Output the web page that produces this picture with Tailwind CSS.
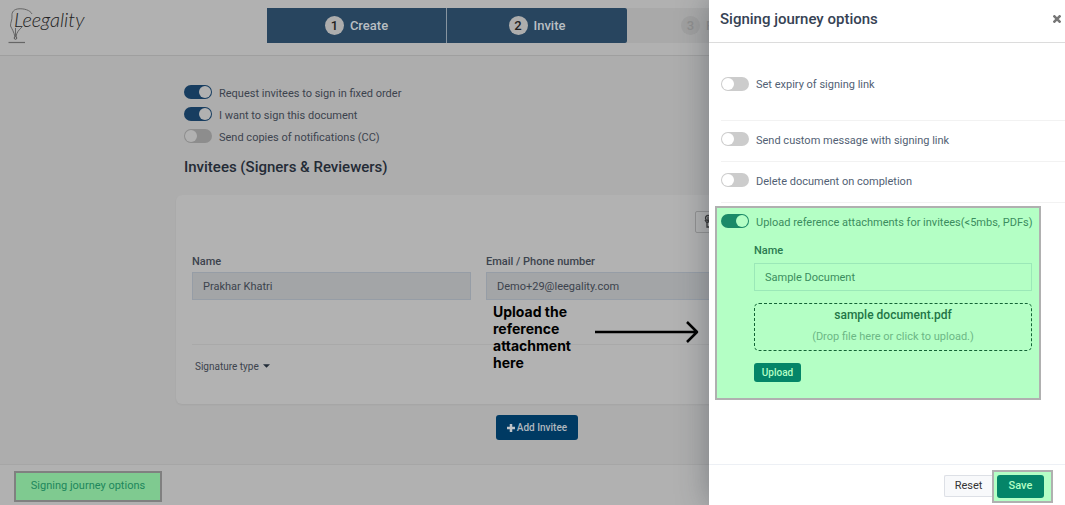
<!DOCTYPE html>
<html lang="en">
<head>
    <meta charset="UTF-8">
    <meta name="viewport" content="width=device-width, initial-scale=1.0">
    <title>Leegality - Invite</title>
    <script src="https://cdn.jsdelivr.net/npm/@tailwindcss/browser@4"></script>
</head>
<body class="relative flex flex-col min-h-screen overflow-hidden bg-[#adadad] font-[Roboto,sans-serif] text-[11px] text-[#3c434d]">
    <!-- Header -->
    <header class="relative flex justify-center bg-[#b1b1b1] border-b border-[#9f9f9f] pt-2 pb-3 pl-[9px]">
        <a href="#" class="absolute left-2 top-2 block">
            <svg class="w-20 h-9" viewBox="0 0 80 36" fill="none">
                <path d="M24 6C22 2 16 0.500 11 0.800C6 1 3.500 4 4 8C4.300 12 2.500 14 2.500 18C4 21 6 24 7 29M14 19C11 22 8.500 24 8 29M7.500 20V28" stroke="#666" stroke-width="1"/>
                <circle cx="7.500" cy="30" r="1.300" stroke="#555"/>
                <path d="M0.500 34.500H17" stroke="#666" stroke-width="1.200"/>
                <text x="6" y="19" font-family="Lato" font-style="italic" font-weight="300" font-size="20" fill="#222">Leegality</text>
            </svg>
        </a>
        <nav class="flex h-[35px] text-[13px]">
            <a href="#" class="flex items-center justify-center gap-[6px] w-[180px] bg-[#28455f] border-r border-[#8794a0] text-[#b9bec3] font-medium">
                <span class="grid place-items-center size-[19px] rounded-full bg-[#adadad] text-[#222]">1</span> Create
            </a>
            <a href="#" class="flex items-center justify-center gap-[6px] w-[180px] rounded-r-xs bg-[#28455f] text-[#b9bec3] font-medium">
                <span class="grid place-items-center size-[19px] rounded-full bg-[#adadad] text-[#222]">2</span> Invite
            </a>
            <a href="#" class="flex items-center pl-[54px] gap-[6px] w-[180px] bg-[#a9a9a9] text-[#8f8f8f] font-medium">
                <span class="grid place-items-center size-[19px] rounded-full bg-[#a0a0a0]">3</span> Review
            </a>
        </nav>
    </header>

    <!-- Invitees -->
    <main class="flex-1 pl-[9px]">
        <div class="w-[722px] mx-auto pt-[25px]">
            <div class="px-2">
                <div class="flex items-center gap-[7px] h-[22px]">
                    <input type="checkbox" id="fixedOrder" checked class="appearance-none shrink-0 w-7 h-[14px] rounded-full bg-[#8d8d8d] checked:bg-[#173d60] p-px before:block before:size-3 before:rounded-full before:bg-[#b1b1b1] checked:before:ml-[14px]">
                    <label for="fixedOrder" class="pt-1">Request invitees to sign in fixed order</label>
                </div>
                <div class="flex items-center gap-[7px] h-[22px]">
                    <input type="checkbox" id="selfSign" checked class="appearance-none shrink-0 w-7 h-[14px] rounded-full bg-[#8d8d8d] checked:bg-[#173d60] p-px before:block before:size-3 before:rounded-full before:bg-[#b1b1b1] checked:before:ml-[14px]">
                    <label for="selfSign" class="pt-1">I want to sign this document</label>
                </div>
                <div class="flex items-center gap-[7px] h-[22px]">
                    <input type="checkbox" id="copies" class="appearance-none shrink-0 w-7 h-[14px] rounded-full bg-[#8d8d8d] checked:bg-[#173d60] p-px before:block before:size-3 before:rounded-full before:bg-[#b1b1b1] checked:before:ml-[14px]">
                    <label for="copies" class="pt-1">Send copies of notifications (CC)</label>
                </div>
                <h2 class="mt-[10px] text-[15px] leading-5 font-medium text-[#242b36]">Invitees (Signers &amp; Reviewers)</h2>
            </div>

            <section class="mt-[18px] rounded-md bg-[#b2b2b2] shadow-xs px-4 pt-4 pb-7">
                <div class="flex justify-end">
                    <button class="w-[187px] h-[22px] pl-2 rounded-xs border border-[#929292]">
                        <svg class="w-3 h-4" viewBox="0 0 12 16" fill="none" stroke="#333" stroke-width="1.300">
                            <circle cx="4" cy="4" r="2.500"/>
                            <path d="M4 3V9M1 6L3 9V13H9V8L4 7M7 2L9 4"/>
                        </svg>
                    </button>
                </div>
                <div class="flex gap-[15px] mt-[21px]">
                    <div class="w-[279px]">
                        <label for="inviteeName" class="block leading-4 font-medium">Name</label>
                        <input id="inviteeName" value="Prakhar Khatri" readonly class="block w-full h-7 mt-[2px] px-[10px] border border-[#969da6] bg-[#a3a5a7]">
                    </div>
                    <div class="flex-1">
                        <label for="inviteeEmail" class="block leading-4 font-medium">Email / Phone number</label>
                        <input id="inviteeEmail" value="Demo+29@leegality.com" readonly class="block w-full h-7 mt-[2px] px-[10px] border border-[#969da6] bg-[#a3a5a7]">
                    </div>
                </div>
                <div class="mt-11 pt-[11px] pl-[3px] border-t border-[#a9a9a9]">
                    <button class="flex items-center gap-1 h-5 text-[10px]">
                        Signature type
                        <svg class="w-[7px] h-1" viewBox="0 0 8 4" fill="#222c38"><path d="M0 0H8L4 4Z"/></svg>
                    </button>
                </div>
            </section>

            <button class="flex items-center justify-center gap-[2px] w-[82px] h-[25px] mx-auto mt-[11px] rounded-[3px] bg-[#003a63] text-[#b0b8bf] text-[10px] font-medium">
                <svg class="size-2" viewBox="0 0 8 8" stroke="#c0c4c8" stroke-width="2.500"><path d="M0 4H8M4 0V8"/></svg>
                Add Invitee
            </button>
        </div>
    </main>

    <footer class="flex items-center h-[41px] px-[14px] pt-[2px] bg-[#b1b1b1] border-t border-[#a6a6a6]">
        <button class="h-[31px] w-[148px] border-2 border-[#808080] bg-[#7fca90] text-[#20875c]">Signing journey options</button>
    </footer>

    <!-- Callout -->
    <div class="absolute left-[493px] top-[303px] flex items-center gap-[14px] font-[Inter,sans-serif] text-sm leading-[17px] font-bold text-black">
        <p class="w-[88px]">Upload the reference attachment here</p>
        <svg class="w-[105px] h-6 mb-[10px]" viewBox="0 0 105 24" fill="none" stroke="#000" stroke-width="2.500">
            <path d="M0 12H102M92 2L102 12L92 22" stroke-linejoin="round"/>
        </svg>
    </div>

    <!-- Options drawer -->
    <aside class="absolute inset-y-0 right-0 w-[356px] flex flex-col bg-white text-[#525f74] shadow-[0_0_30px_rgba(40,50,60,0.4)]">
        <div class="flex items-center justify-between h-[43px] pl-[11px] pr-1 pb-1 border-b border-[#dcdcdc]">
            <h2 class="text-[15px] font-medium text-[#364254]">Signing journey options</h2>
            <button class="size-2">
                <svg class="size-2" viewBox="0 0 8 8" stroke="#777" stroke-width="2.600"><path d="M0.500 0.500L7.500 7.500M7.500 0.500L0.500 7.500"/></svg>
            </button>
        </div>
        <div class="flex-1">
            <div class="ml-3 flex items-center gap-[7px] h-[78px] pt-1 border-b border-[#f2f2f2]">
                <input type="checkbox" id="expiry" class="appearance-none shrink-0 w-7 h-[14px] rounded-full bg-[#ccc] checked:bg-[#1b8a68] p-px before:block before:size-3 before:rounded-full before:bg-white checked:before:ml-[14px]">
                <label for="expiry" class="pt-1">Set expiry of signing link</label>
            </div>
            <div class="ml-3 flex items-center gap-[7px] h-[41px] pb-1 border-b border-[#f2f2f2]">
                <input type="checkbox" id="message" class="appearance-none shrink-0 w-7 h-[14px] rounded-full bg-[#ccc] checked:bg-[#1b8a68] p-px before:block before:size-3 before:rounded-full before:bg-white checked:before:ml-[14px]">
                <label for="message" class="pt-1">Send custom message with signing link</label>
            </div>
            <div class="ml-3 flex items-center gap-[7px] h-[41px] pb-1 border-b border-[#f2f2f2]">
                <input type="checkbox" id="deleteDoc" class="appearance-none shrink-0 w-7 h-[14px] rounded-full bg-[#ccc] checked:bg-[#1b8a68] p-px before:block before:size-3 before:rounded-full before:bg-white checked:before:ml-[14px]">
                <label for="deleteDoc" class="pt-1">Delete document on completion</label>
            </div>

            <section class="w-[326px] ml-[6px] mt-[3px] pt-1 pl-1 pr-[7px] pb-4 border-2 border-[#b0b0b0] bg-[#b4ffc5] text-[#3b8d5e]">
                <div class="flex items-center gap-[7px] h-[18px] whitespace-nowrap">
                    <input type="checkbox" id="attachments" checked class="appearance-none shrink-0 w-7 h-[14px] rounded-full bg-[#ccc] checked:bg-[#1b8a68] p-px before:block before:size-3 before:rounded-full before:bg-[#b4ffc5] checked:before:ml-[14px]">
                    <label for="attachments" class="pt-1">Upload reference attachments for invitees(&lt;5mbs, PDFs)</label>
                </div>
                <div class="ml-[33px] mt-[13px]">
                    <label for="docName" class="block leading-4 font-medium text-[#2b7a50]">Name</label>
                    <input id="docName" value="Sample Document" class="block w-full h-7 mt-1 px-[10px] border border-[#9be8b8]">
                    <button class="block w-full h-12 mt-3 pb-[2px] rounded-[5px] border border-dashed border-[#126335]">
                        <span class="block leading-[22px] text-xs font-medium text-[#1f7545]">sample document.pdf</span>
                        <span class="block leading-[22px] text-[#6cb785]">(Drop file here or click to upload.)</span>
                    </button>
                    <button class="block w-[47px] h-[19px] mt-3 rounded-[3px] bg-[#048568] text-[10px] font-medium text-[#b4ffc5]">Upload</button>
                </div>
            </section>
        </div>
        <div class="flex items-center justify-end h-[41px] pt-[2px] pr-3 border-t border-[#edf0f5]">
            <button class="w-12 h-[22px] rounded-l-xs border border-r-0 border-[#dde0e6] bg-[#f8f9fb] text-[#333]">Reset</button>
            <div class="p-[3px] pr-[7px] border-2 border-[#b0b0b0] bg-[#b4ffc5]">
                <button class="block w-[47px] h-[23px] rounded-[3px] bg-[#048568] font-medium text-[#b4ffc5]">Save</button>
            </div>
        </div>
    </aside>
</body>
</html>
